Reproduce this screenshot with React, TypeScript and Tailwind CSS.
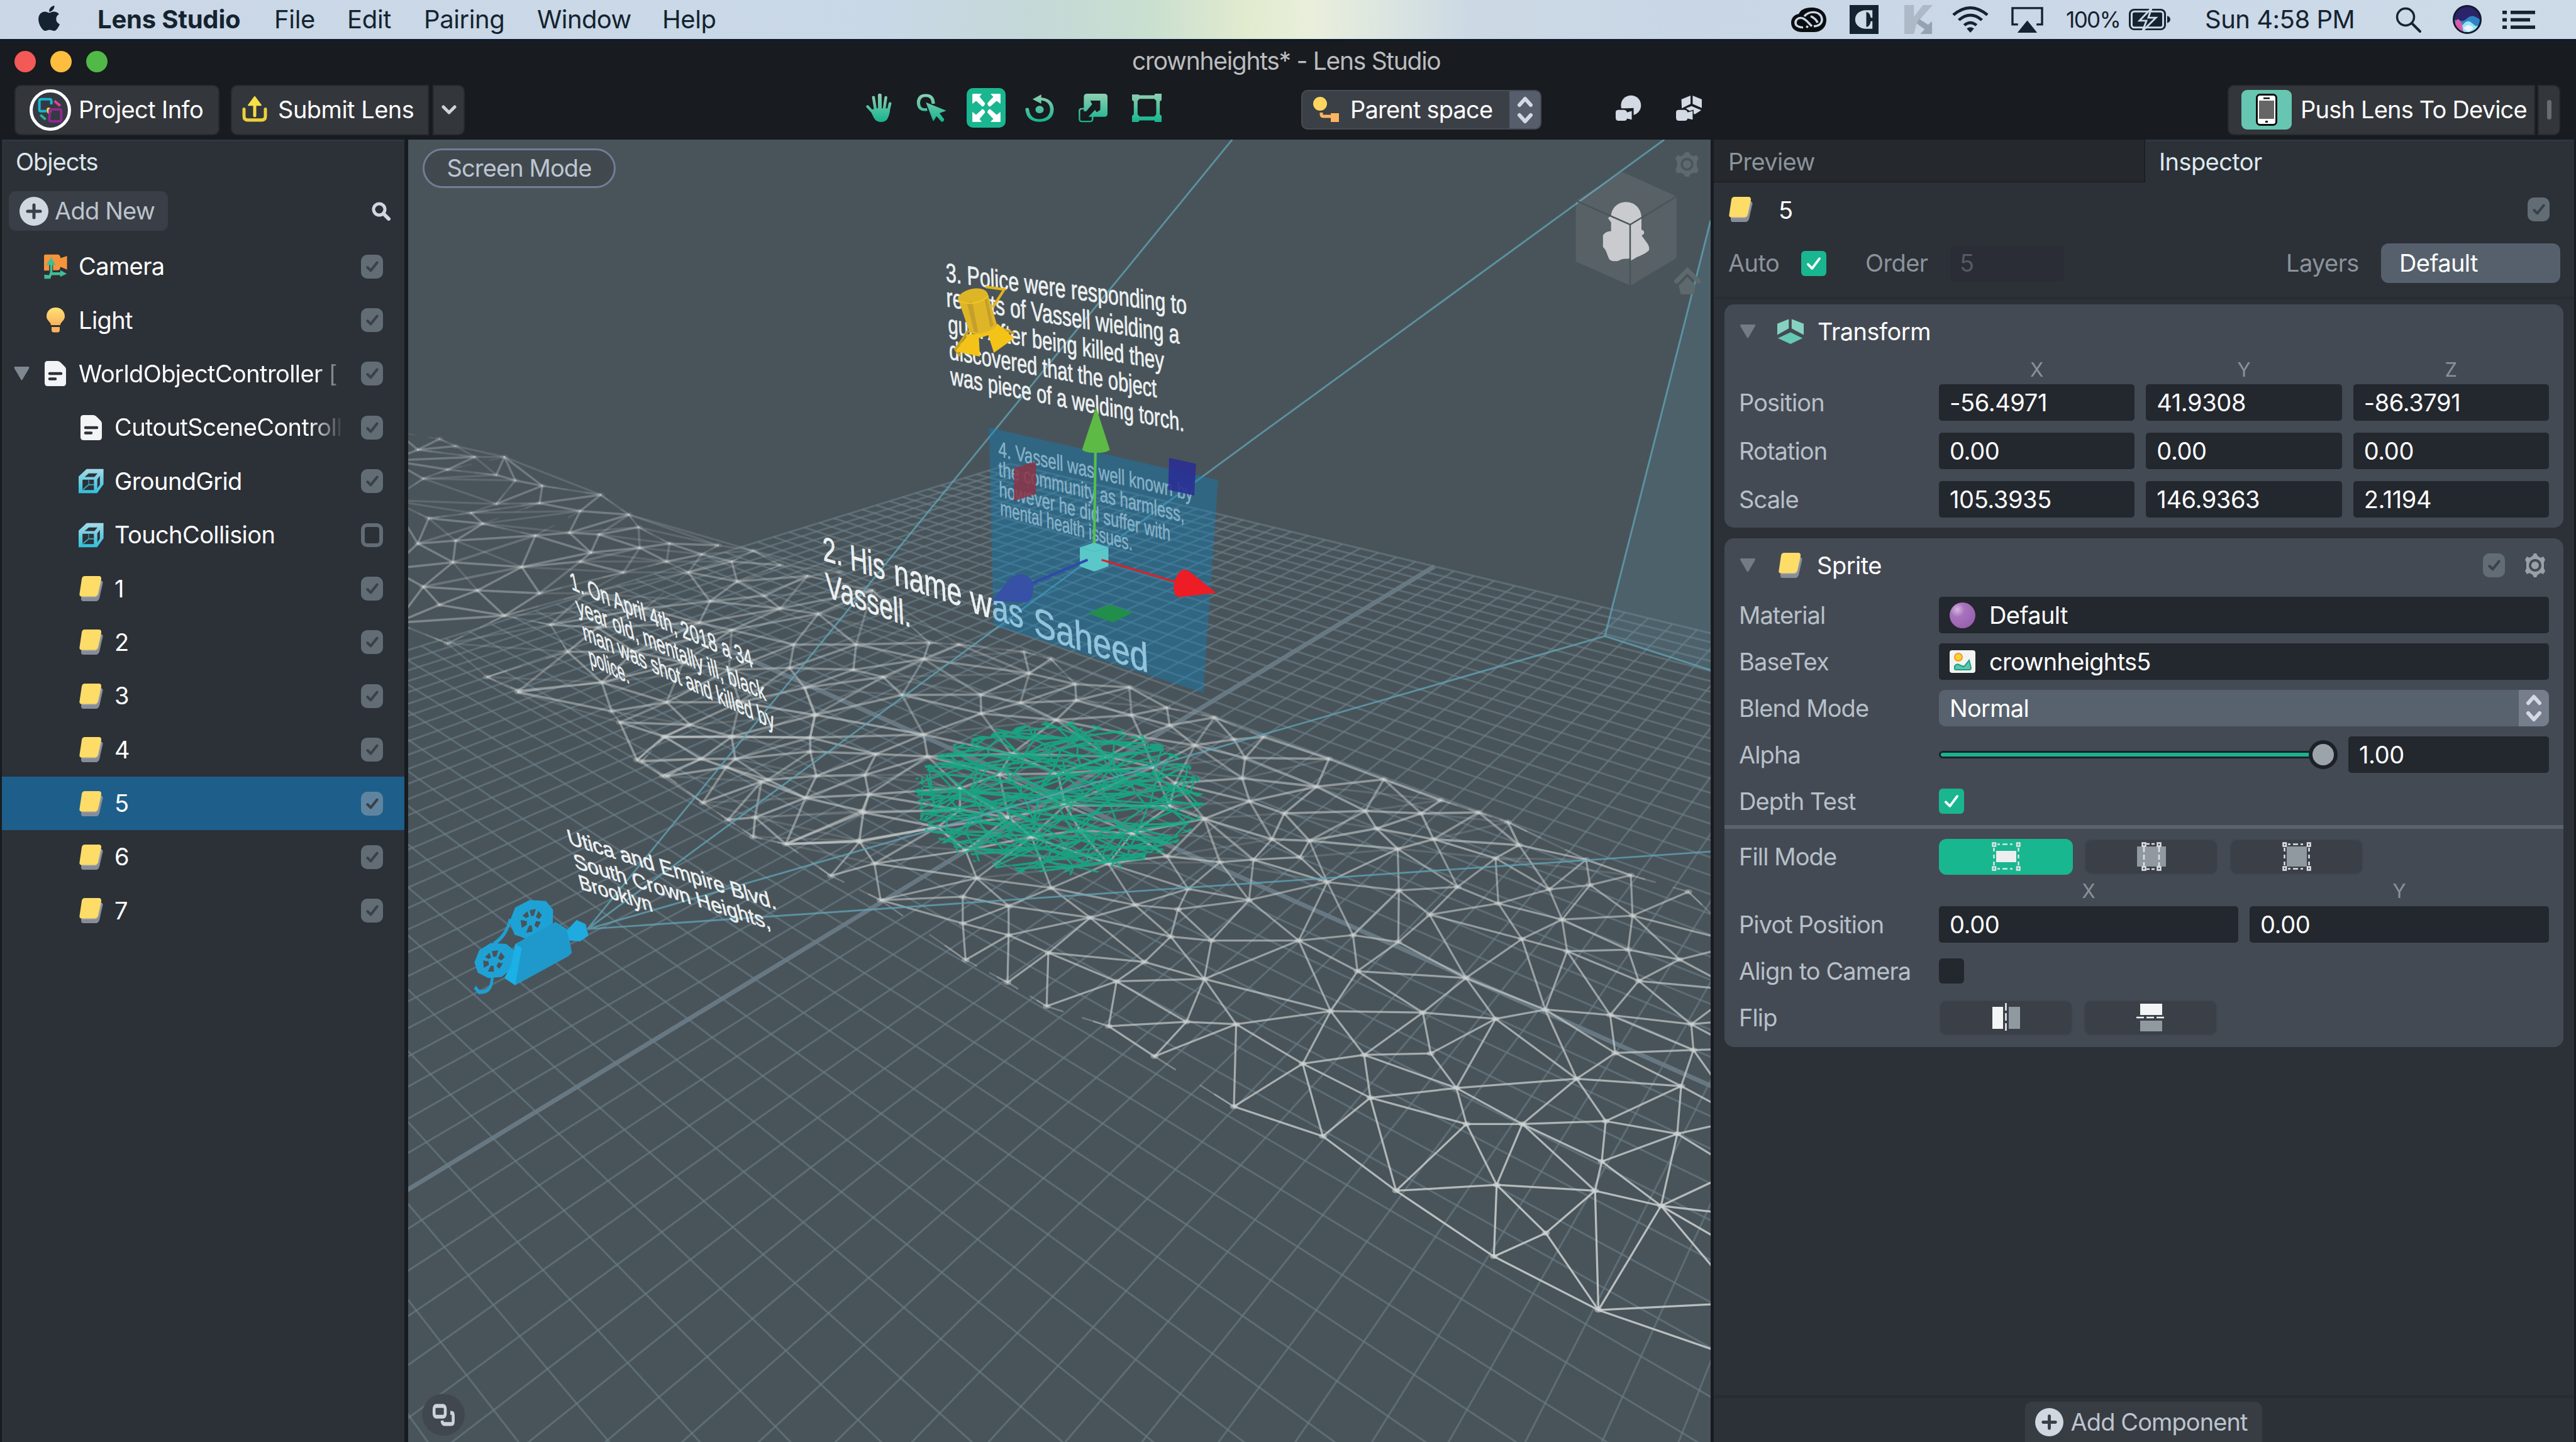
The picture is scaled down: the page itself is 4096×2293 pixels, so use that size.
import React from "react";
import { FaApple } from "react-icons/fa";

/* ---------------------------------------------------------------- helpers */

type Pt = [number, number];

function seeded(seed: number) {
  let s = seed;
  return () => {
    s = (s * 1664525 + 1013904223) % 4294967296;
    return s / 4294967296;
  };
}

type Edge = { a: number; b: number; uses: number };

const sides = (t: number[]): Pt[] => [
  [t[0], t[1]],
  [t[1], t[2]],
  [t[2], t[0]],
];
const edgeKey = (a: number, b: number) => (a < b ? `${a}_${b}` : `${b}_${a}`);

/** Bowyer-Watson triangulation. */
function triangulate(points: Pt[]): number[][] {
  const n = points.length;
  const p: Pt[] = [...points, [-9000, -9000], [9000, -9000], [0, 12000]];
  let tris: number[][] = [[n, n + 1, n + 2]];
  const inCircle = (t: number[], q: Pt) => {
    const [ax, ay] = p[t[0]];
    const [bx, by] = p[t[1]];
    const [cx, cy] = p[t[2]];
    const d = 2 * (ax * (by - cy) + bx * (cy - ay) + cx * (ay - by));
    if (Math.abs(d) < 1e-9) return false;
    const a2 = ax * ax + ay * ay;
    const b2 = bx * bx + by * by;
    const c2 = cx * cx + cy * cy;
    const ux = (a2 * (by - cy) + b2 * (cy - ay) + c2 * (ay - by)) / d;
    const uy = (a2 * (cx - bx) + b2 * (ax - cx) + c2 * (bx - ax)) / d;
    return (q[0] - ux) ** 2 + (q[1] - uy) ** 2 < (ax - ux) ** 2 + (ay - uy) ** 2;
  };
  for (let i = 0; i < n; i++) {
    const bad = tris.filter((t) => inCircle(t, p[i]));
    const open = new Map<string, Pt>();
    bad.forEach((t) =>
      sides(t).forEach(([a, b]) => {
        const k = edgeKey(a, b);
        if (open.has(k)) open.delete(k);
        else open.set(k, [a, b]);
      }),
    );
    tris = tris.filter((t) => !bad.includes(t));
    open.forEach(([a, b]) => tris.push([a, b, i]));
  }
  return tris.filter((t) => t.every((v) => v < n));
}

function edgesOf(tris: number[][]): Map<string, Edge> {
  const edges = new Map<string, Edge>();
  tris.forEach((t) =>
    sides(t).forEach(([a, b]) => {
      const k = edgeKey(a, b);
      const seen = edges.get(k);
      if (seen) seen.uses++;
      else edges.set(k, { a, b, uses: 1 });
    }),
  );
  return edges;
}

/* ------------------------------------------------------- ground projection */

const WA = 0.0172;
const WB = -0.01454;

function project(i: number, j: number): Pt {
  const a = i * WA;
  const b = j * WB;
  const w = 1 + a + b;
  return [(1869 + a * 3923 - b * 941) / w, (1407 + (a + b) * 160) / w];
}

function unproject(x: number, y: number): Pt {
  const s = (1407 - y) / (y - 160);
  const a = (x * (1 + s) - 1869 + 941 * s) / 4864;
  return [a / WA, (s - a) / WB];
}

function gridLines() {
  const out: { a: Pt; b: Pt; main: boolean }[] = [];
  for (let k = -28; k <= 28; k++) {
    const startI = Math.max(-28, (0.12 - 1 - k * WB) / WA);
    out.push({ a: project(startI, k), b: project(28, k), main: k === 0 });
    const endJ = Math.min(28, (1 + k * WA - 0.12) / -WB);
    out.push({ a: project(k, -28), b: project(k, endJ), main: k === 0 });
  }
  return out;
}
const GRID = gridLines();

const nearRaw =
  "58,455 205,503 205,448 287,467 287,527 230,410 210,353 433,491 358,563 480,622 530,582 577,530 513,465 363,430 465,380 590,474 608,432 570,365 650,538 637,617 717,455 725,372 665,377 808,367 825,333 857,418 806,538 903,527 911,601 863,683 694,710 605,705 466,714 548,776 285,624 210,578 355,673 813,791 923,773 1042,770 1028,686 934,861 849,940 690,879 980,1052 1106,915 1088,841 1206,915 1160,1040 1155,1187 1248,1139 1336,1052 1348,992 1342,1297 1454,1083 1483,935 1490,837 1355,909 1303,822 1372,769 1158,699 1247,680 1363,691 1105,615 1414,621 1512,763 1508,710 1286,560 1205,535 1277,495 1395,557 1487,577 1403,487 1327,424 1254,433 1163,462 1090,428 1040,485 984,541 985,435 983,350 945,308 925,272 1047,330 1025,277 1158,369 1200,342 1320,372 1400,404 1503,438 780,277 838,222 758,330 718,252 705,205 710,163 637,288 690,125 743,120 860,165 958,207 620,137 575,96 570,60 507,75 503,18 655,80 408,45 308,50 237,33 238,72 372,85 292,155 270,197 375,195 388,260 415,312 508,318 328,325 287,285 200,225 200,270 160,305 142,160 50,155 30,198 37,238 25,272 20,333 47,380 135,115 585,215 545,182 575,262 465,160 525,120 1180,295 1128,275 1060,250 1600,905 1590,1010 1620,1105 1600,1180 1600,1282 1640,1415 1590,760 1600,700 1590,640 1600,545";
const farRaw =
  "75,1157 148,1250 205,1292 297,1180 265,1105 352,1113 330,1018 245,1018 212,945 237,858 140,825 85,932 90,872 118,795 75,675 125,640 200,705 165,770 245,768 320,790 358,745 410,800 355,855 340,905 430,892 428,835 485,880 480,930 545,910 575,885 520,960 600,930 640,900 690,940 610,985 740,970 660,1025 800,960 860,1010 690,1060 760,1075 715,1160 707,1225 735,1280 615,1320 595,1230 510,1210 480,1320 360,1265 378,1345 475,1415 425,1480 480,1525 600,1415 590,1500 655,1540 745,1418 755,1355 915,1300 955,1200 965,1155 880,1250 825,1230 830,1160 1020,1160 1150,1240 1140,1180 1190,1200 1235,1270 30,700 20,620 60,590 40,810 30,1000 60,1050 20,880 -20,1100 -30,950 -30,760 -30,650 -20,570 400,960 440,1060 540,1100 600,1120 420,1180 560,1040 320,930 130,1010 180,1080 300,850 165,690 90,610 180,640 250,720";
const midRaw =
  "310,25 590,90 650,170 710,200 785,95 715,120 900,120 910,165 815,165 1000,208 1130,75 1118,150 1135,200 1105,245 965,285 1050,340 1175,405 1255,335 1265,275 820,255 960,325 890,290";

const parse = (raw: string): Pt[] =>
  raw.split(" ").map((s) => {
    const [x, y] = s.split(",").map(Number);
    return [x, y] as Pt;
  });

const meshPts: Pt[] = [
  ...parse(nearRaw).map(([x, y]): Pt => [1500 + x / 1.0116, 1200 + y / 1.1615]),
  ...parse(farRaw).map(([x, y]): Pt => [720 + x / 1.0453, 400 + y / 1.568]),
  ...parse(midRaw).map(([x, y]): Pt => [720 + x / 1.568, 1200 + y / 1.1615]),
];

type Seg = { a: Pt; b: Pt; o: number; w: number };

const depthOpacity = (y: number) => Math.min(0.88, Math.max(0.17, 0.17 + ((y - 850) / 1250) * 0.68));
const mix = (a: Pt, b: Pt, t: number): Pt => [a[0] + (b[0] - a[0]) * t, a[1] + (b[1] - a[1]) * t];
const dist = (a: Pt, b: Pt) => Math.hypot(a[0] - b[0], a[1] - b[1]);

function buildMesh(): Seg[] {
  const world = meshPts.map(([x, y]) => unproject(x, y));
  let tris = triangulate(world).filter((t) =>
    sides(t).every(([a, b]) => dist(world[a], world[b]) < 4.7 || dist(meshPts[a], meshPts[b]) < 170),
  );
  for (let pass = 0; pass < 3; pass++) {
    const e = edgesOf(tris);
    tris = tris.filter((t) => {
      const s = sides(t);
      if (s.every(([a, b]) => e.get(edgeKey(a, b))!.uses > 1)) return true;
      const l = s.map(([a, b]) => dist(meshPts[a], meshPts[b])).sort((x, y) => x - y);
      return l[2] < (l[0] + l[1]) * 0.93;
    });
  }
  const segs: Seg[] = [];
  let i = 0;
  edgesOf(tris).forEach((e) => {
    const a = meshPts[e.a];
    const b = meshPts[e.b];
    const y = (a[1] + b[1]) / 2;
    const o = depthOpacity(y);
    i++;
    const keepRim = y > 1950 || i % 4 === 0;
    if (e.uses === 1 && !keepRim) {
      segs.push({ a, b: mix(a, b, 0.42), o: o * 0.45, w: 3 });
      segs.push({ a, b: mix(a, b, 0.24), o: o * 0.6, w: 3 });
      segs.push({ a: b, b: mix(b, a, 0.26), o: o * 0.55, w: 3 });
      return;
    }
    segs.push({ a, b, o, w: y < 1500 ? 4.2 : 3.6 });
  });
  const idx = meshPts.map((_, k) => k).filter((k) => meshPts[k][1] < 1560);
  edgesOf(triangulate(idx.map((k): Pt => [meshPts[k][0] * 0.22, meshPts[k][1]]))).forEach((e) => {
    const a = meshPts[idx[e.a]];
    const b = meshPts[idx[e.b]];
    if (dist(a, b) < 270 && e.uses > 1) segs.push({ a, b, o: 0.17, w: 3.6 });
  });
  return segs;
}
const MESH = buildMesh();

const SPAN_X = 255;
const SPAN_Y = 133;

function buildDisc(seed: number, count: number, squeeze: number): string {
  const rnd = seeded(seed);
  const pts: Pt[] = [];
  while (pts.length < count) {
    const a = rnd() * Math.PI * 2;
    const r = Math.sqrt(rnd()) * 1.1;
    pts.push([Math.cos(a) * r * SPAN_X, Math.sin(a) * r * SPAN_Y]);
  }
  const out: string[] = [];
  edgesOf(triangulate(pts.map(([x, y]): Pt => [x * squeeze, y]))).forEach((e) => {
    const a = pts[e.a];
    const b = pts[e.b];
    out.push(`M${(1872 + a[0]).toFixed(1)} ${(1412 + a[1]).toFixed(1)}L${(1872 + b[0]).toFixed(1)} ${(1412 + b[1]).toFixed(1)}`);
  });
  return out.join("");
}
const discPath = buildDisc(7, 135, 0.3) + buildDisc(99, 90, 0.42);

/* Ragged outline that trims the disc's strands unevenly. */
const discOutline = Array.from({ length: 72 }, (_, i) => {
  const t = (i / 72) * Math.PI * 2;
  const r = i % 2 ? 1.03 : 0.95;
  return `${(1872 + Math.cos(t) * SPAN_X * r).toFixed(1)},${(1412 + Math.sin(t) * SPAN_Y * r).toFixed(1)}`;
}).join(" ");

/* ------------------------------------------------------------ scene pieces */

type LineSpec = { t: string; x: number; y: number; x2: number; y2: number; s: number };

const Line3D = ({ l, lean = 0 }: { l: LineSpec; lean?: number }) => (
  <text
    transform={`matrix(1 ${(l.y2 - l.y) / (l.x2 - l.x)} ${lean} 1 ${l.x} ${l.y})`}
    fontSize={l.s}
    textLength={l.x2 - l.x}
    lengthAdjust="spacingAndGlyphs"
  >
    {l.t}
  </text>
);

const note3: LineSpec[] = [
  { t: "3. Police were responding to", x: 1673, y: 498, x2: 2099, y2: 556, s: 47 },
  { t: "reports of Vassell wielding a", x: 1674, y: 542, x2: 2086, y2: 608, s: 47 },
  { t: "gun. After being killed they", x: 1677, y: 589, x2: 2059, y2: 654, s: 46 },
  { t: "discovered that the object", x: 1679, y: 635, x2: 2046, y2: 703, s: 46 },
  { t: "was piece of a welding torch.", x: 1681, y: 680, x2: 2095, y2: 763, s: 45 },
];
const note4: LineSpec[] = [
  { t: "4. Vassell was well known by", x: 1766, y: 807, x2: 2110, y2: 886, s: 38 },
  { t: "the community as harmless,", x: 1766, y: 842, x2: 2095, y2: 924, s: 38 },
  { t: "however he did suffer with", x: 1767, y: 878, x2: 2070, y2: 957, s: 38 },
  { t: "mental health issues.", x: 1769, y: 911, x2: 2003, y2: 974, s: 38 },
];
const note2: LineSpec[] = [
  { t: "2.", x: 1456, y: 991, x2: 1491, y2: 1001, s: 61 },
  { t: "His", x: 1504, y: 1007, x2: 1566, y2: 1026, s: 64 },
  { t: "name", x: 1582, y: 1034, x2: 1702, y2: 1073, s: 67 },
  { t: "was", x: 1717, y: 1082, x2: 1811, y2: 1112, s: 69 },
  { t: "Saheed", x: 1829, y: 1123, x2: 2032, y2: 1190, s: 72 },
  { t: "Vassell.", x: 1461, y: 1055, x2: 1612, y2: 1110, s: 62 },
];
const note1: LineSpec[] = [
  { t: "1. On April 4th, 2018 a 34", x: 1011, y: 1042, x2: 1334, y2: 1182, s: 45 },
  { t: "year old, mentally ill, black", x: 1022, y: 1086, x2: 1356, y2: 1240, s: 45 },
  { t: "man was shot and killed by", x: 1033, y: 1131, x2: 1372, y2: 1291, s: 45 },
  { t: "police.", x: 1044, y: 1175, x2: 1115, y2: 1210, s: 45 },
];
const note0: LineSpec[] = [
  { t: "Utica and Empire Blvd.", x: 1007, y: 1493, x2: 1375, y2: 1609, s: 39 },
  { t: "South Crown Heights,", x: 1018, y: 1535, x2: 1365, y2: 1644, s: 38 },
  { t: "Brooklyn", x: 1027, y: 1572, x2: 1156, y2: 1613, s: 37 },
];

const Scene = () => (
  <svg
    className="block h-full w-full font-['Liberation_Sans',Arial,sans-serif]"
    viewBox="722 247 2303 2303"
    preserveAspectRatio="none"
  >
    <defs>
      <clipPath id="disc">
        <polygon points={discOutline} />
      </clipPath>
    </defs>
    <rect x="722" y="247" width="2303" height="2303" fill="#49545a" />
    <g stroke="#6b7c86" fill="none">
      {GRID.map((g, i) => (
        <line
          key={i}
          x1={g.a[0]}
          y1={g.a[1]}
          x2={g.b[0]}
          y2={g.b[1]}
          strokeWidth={g.main ? 8 : 3.4}
          strokeOpacity={g.main ? 0.9 : 0.62}
        />
      ))}
    </g>
    <g fill="none" stroke="#c8cdcd" strokeLinecap="round">
      {MESH.map((e, i) => (
        <line
          key={i}
          x1={e.a[0]}
          y1={e.a[1]}
          x2={e.b[0]}
          y2={e.b[1]}
          strokeWidth={e.w}
          strokeOpacity={e.o}
        />
      ))}
    </g>
    <g fill="#d5d9d9">
      {meshPts.map(([x, y], i) => (
        <ellipse key={i} cx={x} cy={y} rx={7} ry={4.500} fillOpacity={depthOpacity(y) * 0.6} />
      ))}
    </g>
    <g clipPath="url(#disc)">
      <path d={discPath} stroke="#12ad87" strokeWidth="3.400" strokeOpacity="0.85" fill="none" />
    </g>

    {/* camera frustum */}
    <path d="M3025 390L2838 1125L3025 1185Z" fill="#5a8ea3" fillOpacity="0.24" />
    <g stroke="#62a5b8" strokeWidth="3.200" strokeOpacity="0.75" fill="none">
      <path d="M1039 1643L2179 247M1039 1643L2220 774L2943 247M1039 1643L2577 1200L2838 1125M1039 1643L3025 1506" />
      <path d="M3025 390L2838 1125L3025 1185" />
    </g>

    {/* view orientation cube */}
    <g transform="translate(2730 140) scale(0.33333)">
      <path d="M415 492L705 622V948L460 1096L170 968V645Z" fill="#ffffff" fillOpacity="0.08" />
      <path
        d="M437 652C485 652 520 690 518 740V800C530 802 536 812 530 822L519 830L545 866C556 880 562 895 558 908C530 935 500 938 485 950L462 963V952C430 952 410 954 400 962C385 968 360 968 349 957C335 935 335 915 322 900L314 890V830C322 812 340 808 357 806V760L341 738L357 722C362 680 395 652 437 652Z"
        fill="#c9cbce"
      />
      <path d="M172 645L458 772L705 622M458 772V1096" fill="none" stroke="#49545a" strokeWidth="8" />
      <g fill="#5e696e">
        <path
          fillRule="evenodd"
          d="M744 400L750 388H770L778 402L795 410L810 402L821 422L812 438V465L821 482L810 500L795 496L778 504L770 518H750L742 504L725 496L709 500L698 482L707 465V438L698 422L709 402L725 410ZM760 418A34 34 0 1 0 760.100 418ZM760 430A22 22 0 1 1 759.900 430Z"
        />
        <path d="M716 1096L762 1050L806 1096L797 1142H727Z" />
        <path d="M704 1072L762 1014L820 1072" fill="none" stroke="#5e696e" strokeWidth="24" strokeLinecap="round" />
      </g>
    </g>

    {/* captions standing in the scene */}
    <g fill="#ecf0f1" stroke="#ecf0f1" strokeWidth="0.900">
      {note3.map((l) => <Line3D key={l.t} l={l} lean={0.03} />)}
      {note2.map((l) => <Line3D key={l.t} l={l} lean={0.05} />)}
      {note1.map((l) => <Line3D key={l.t} l={l} lean={0.2} />)}
      {note0.map((l) => <Line3D key={l.t} l={l} lean={0.25} />)}
    </g>

    {/* selected sprite */}
    <path d="M1749 756L2154 849L2128 1225L1757 1105Z" fill="#0d82bd" fillOpacity="0.4" />
    <g fill="#86b1c8" stroke="#86b1c8" strokeWidth="0.700">
      {note4.map((l) => <Line3D key={l.t} l={l} lean={0.02} />)}
    </g>

    <g transform="translate(1400 400) scale(0.57398)">
      {/* spot light */}
      <path d="M598 187L655 195L620 250" fill="none" stroke="#e3b41a" strokeWidth="8" />
      <path d="M545 322L505 380L520 400M605 300L685 330" fill="none" stroke="#c99f1e" strokeWidth="8" />
      <path d="M512 222C522 192 600 176 606 214L633 305C632 330 545 345 545 318Z" fill="#dfb528" />
      <path d="M540 235L562 325L575 328L556 232ZM594 222L612 312L622 305L602 220Z" fill="#b8962c" fillOpacity="0.7" />
      <path d="M513 228C540 246 590 236 606 214" fill="none" stroke="#f0c326" strokeWidth="4" />
      <path d="M545 332L505 386L580 402L577 345L606 336L623 390L686 345L634 300C625 325 580 335 545 332Z" fill="#f3c318" />

      {/* transform gizmo */}
      <path d="M1163 714L1246 732L1240 830L1160 812Z" fill="#2a2f94" fillOpacity="0.9" />
      <path d="M685 745L753 725V825L685 847Z" fill="#8c3345" fillOpacity="0.85" />
      <path d="M936 690L932 985" stroke="#54bf4d" strokeWidth="8" />
      <path d="M912 1193L978 1166L1052 1190L990 1221Z" fill="#228e4b" />
      <path d="M932 975L976 990V1048L932 1064L888 1048V990Z" fill="#5ac8c9" />
      <path d="M888 990L932 1003L976 990" fill="none" stroke="#49bdc0" strokeWidth="2" />
      <path d="M912 1028L735 1103" stroke="#2f49ad" strokeWidth="8" />
      <path d="M618 1154L672 1085C692 1068 715 1070 732 1082C746 1092 748 1120 740 1142C736 1158 728 1159 712 1159Z" fill="#3751a6" />
      <path d="M955 1028L1185 1097" stroke="#e01f28" strokeWidth="6" />
      <path d="M1308 1130L1232 1069C1216 1056 1204 1055 1194 1067C1178 1085 1172 1118 1182 1136C1187 1143 1194 1143 1205 1142Z" fill="#ee1c25" />
      <path d="M938 558L980 688C976 702 900 702 895 688Z" fill="#5cba45" />
    </g>

    {/* movie camera */}
    <g transform="translate(720 1200) scale(0.63776 0.86096)">
      <path d="M286 494C278 520 262 535 240 545M236 612C236 635 225 645 200 644L188 634" fill="none" stroke="#1d9fd3" strokeWidth="8" />
      <path d="M284 500L300 470L340 455L385 457L405 475L404 503L380 524L330 534L298 526Z" fill="#1ea2d6" />
      <path d="M187 583L200 558L232 543L275 545L300 560L290 596L262 613L225 615L196 604Z" fill="#1ea2d6" />
      <g fill="#49545a">
        <path d="M340 476L357 473L352 487L344 488ZM364 477L374 486L366 494L357 490ZM371 500L362 512L353 507L358 498ZM348 520L330 522L338 508L346 507ZM318 512L315 496L332 498L332 506ZM320 487L334 478L338 489L330 492Z" />
        <path d="M235 560L253 558L248 571L239 572ZM260 562L271 572L262 579L252 575ZM266 585L256 596L248 591L253 583ZM241 602L224 602L232 590L240 590ZM213 594L211 579L226 581L227 588ZM216 572L229 563L233 573L226 576Z" />
      </g>
      <path d="M300 545L412 500L445 515L457 563L448 570L300 630L270 615L288 590Z" fill="#1f99cc" />
      <path d="M300 545L318 553L300 630L270 615L288 590Z" fill="#1bb0e6" />
      <path d="M443 517L470 496L495 504L503 528L480 540L450 538Z" fill="#1fabe0" />
    </g>

    <g transform="translate(720 1200) scale(0.63776 0.86096)">
      <ellipse cx="101" cy="1512" rx="59" ry="43" fill="#41474f" />
      <g fill="none" stroke="#ccd3dc" strokeWidth="8">
        <rect x="75" y="1494" width="31" height="22" rx="6" />
        <path d="M120 1508H123Q128 1508 128 1513V1526Q128 1531 122 1531H103Q98 1531 97 1524" />
      </g>
    </g>
  </svg>
);

/* ------------------------------------------------------------------- icons */

const Crop = ({ vb, cls, children }: { vb: string; cls: string; children: React.ReactNode }) => (
  <svg viewBox={vb} preserveAspectRatio="none" className={`block shrink-0 overflow-visible ${cls}`}>
    {children}
  </svg>
);

const SpriteIcon = ({ cls = "h-[40px] w-[38px]" }: { cls?: string }) => (
  <Crop vb="0 0 38 40" cls={cls}>
    <path d="M8 7H33C36 7 38 9 37 12L32 35C31 38 29 40 26 40H7C4 40 3 38 3 35Z" fill="#9a9fa8" />
    <path d="M4 34H24C28 34 30 32 31 28L36 8L38 10L32 35C31 38 29 40 26 40H7C4 40 3 38 3 35Z" fill="#7c828d" fillOpacity="0.6" />
    <path d="M9 0H31C34 0 35.500 2 35 5L30 28C29 31 27 32.500 24 32.500H4C1 32.500 0 30.500 0.500 28L4 4.500C4.500 1.500 6 0 9 0Z" fill="#fddc68" />
  </Crop>
);

const FileIcon = () => (
  <Crop vb="0 0 34 40" cls="h-[40px] w-[34px]">
    <path d="M5 0H20C22 0 24 1 26 3L32 9C33.500 10.500 34 12 34 14V35Q34 40 29 40H5Q0 40 0 35V5Q0 0 5 0Z" fill="#f3f4f6" />
    <path d="M8 20H26M8 28.500H17" stroke="#2c3037" strokeWidth="4.500" strokeLinecap="round" />
  </Crop>
);

const CubeIcon = () => (
  <Crop vb="299 516 97 56" cls="h-[40px] w-[40px]">
    <defs>
      <linearGradient id="cubeFill" x1="0" y1="0" x2="0" y2="1">
        <stop offset="0" stopColor="#a5dbe9" />
        <stop offset="1" stopColor="#2fbfda" />
      </linearGradient>
    </defs>
    <path
      fill="url(#cubeFill)"
      fillRule="evenodd"
      d="M299 534L330 517H395V551L370 571H299ZM314 541V564H358V541ZM330 531L322 535H360L372 527H338ZM371 540V560L381 552V532Z"
    />
    <path d="M338 541V552H358M338 552L316 563" stroke="#39a9c4" strokeWidth="3" fill="none" />
  </Crop>
);

const CameraIcon = () => (
  <Crop vb="163 58 89 55" cls="h-[40px] w-[37px]">
    <path d="M163 62Q163 59 168 59H215Q225 59 226 67L251 62V92L226 86Q224 94 215 94H163Z" fill="#f6943c" />
    <path d="M190 72V101H232" stroke="#2c3037" strokeWidth="15" fill="none" />
    <path d="M186 98V82H172L190 65L208 82H195V98H225V93L250 101L225 108V104H192L187 112H164V103L182 104Z" fill="#42bd96" />
  </Crop>
);

const BulbIcon = () => (
  <Crop vb="0 0 29 40" cls="h-[40px] w-[29px]">
    <defs>
      <linearGradient id="bulbFill" x1="0" y1="0" x2="0" y2="1">
        <stop offset="0" stopColor="#fde275" />
        <stop offset="1" stopColor="#fbb35c" />
      </linearGradient>
    </defs>
    <path d="M14.500 0C23 0 29 6 29 14C29 21 22 23 22 28H7C7 23 0 21 0 14C0 6 6 0 14.500 0Z" fill="url(#bulbFill)" />
    <path d="M8 31H21V36Q21 39.500 17 39.500H12Q8 39.500 8 36Z" fill="#fbb35c" />
  </Crop>
);

const Check = ({ on = true, selected = false }: { on?: boolean; selected?: boolean }) => (
  <div
    className={`flex h-[38px] w-[35px] shrink-0 items-center justify-center rounded-[10px] ${
      on ? (selected ? "bg-[#5f849f]" : "bg-[#626c75]") : "border-[6px] border-[#626c75]"
    }`}
  >
    {on && (
      <svg viewBox="0 0 16 16" className="h-[20px] w-[20px]">
        <path d="M2 9L6 13L14 3" stroke="#3a4149" strokeWidth="3.400" fill="none" strokeLinecap="round" strokeLinejoin="round" />
      </svg>
    )}
  </div>
);

const GreenCheck = () => (
  <div className="flex h-[40px] w-[40px] shrink-0 items-center justify-center rounded-[6px] bg-[#19b690]">
    <svg viewBox="0 0 20 20" className="h-[26px] w-[26px]">
      <path d="M3 11L8 16L17 4" stroke="#fff" strokeWidth="3" fill="none" strokeLinecap="round" strokeLinejoin="round" />
    </svg>
  </div>
);

const PlusDisc = ({ cls }: { cls: string }) => (
  <svg viewBox="0 0 46 46" className={`shrink-0 ${cls}`}>
    <circle cx="23" cy="23" r="23" fill="#d0d7e0" />
    <path d="M23 13V33M13 23H33" stroke="#3a3e46" strokeWidth="5" strokeLinecap="round" />
  </svg>
);

const Triangle = ({ cls }: { cls: string }) => (
  <svg viewBox="0 0 24 22" className={`shrink-0 ${cls}`}>
    <path d="M1 0H23Q24.500 1 23.500 3L13.500 20Q12 23 10.500 20L0.500 3Q-0.500 1 1 0Z" fill="currentColor" />
  </svg>
);

const Stepper = ({ cls }: { cls: string }) => (
  <div className={`flex h-full shrink-0 items-center justify-center ${cls}`}>
    <svg viewBox="0 0 26 44" className="h-[44px] w-[26px]">
      <path d="M4 14L13 4L22 14M4 30L13 40L22 30" stroke="#d3dae3" strokeWidth="6" fill="none" strokeLinecap="round" strokeLinejoin="round" />
    </svg>
  </div>
);

/* ---------------------------------------------------------------- menu bar */

const MenuBar = () => (
  <div className="flex h-[62px] shrink-0 items-center bg-[linear-gradient(90deg,#cbd7e6_0%,#c9d8e7_34%,#c5d8d8_40%,#c9dfd0_44.500%,#e2ebcf_48.500%,#e9efdc_51%,#ccd9e4_57%,#c9d6e6_65%,#cddae8_100%)] text-[40px] text-[#14232f]">
    <FaApple className="ml-[55px] mb-[4px] size-[46px] shrink-0" />
    <div className="ml-[54px] w-[281px] whitespace-nowrap font-bold tracking-[-0.2px]">Lens Studio</div>
    <div className="w-[116px] tracking-[-0.3px]">File</div>
    <div className="w-[122px] tracking-[-0.3px]">Edit</div>
    <div className="w-[180px] tracking-[-0.4px]">Pairing</div>
    <div className="w-[199px] tracking-[-0.6px]">Window</div>
    <div className="tracking-[-0.4px]">Help</div>
    <div className="ml-auto flex w-[1248px] shrink-0 items-center">
      <Crop vb="0 0 56 42" cls="h-[39px] w-[56px]">
        <path d="M18 42C6 42 0 35 0 26C0 18 5 12 12 11C15 4 22 0 32 0C46 0 56 8 56 21C56 34 48 42 36 42Z" fill="#0a0d10" />
        <g fill="none" stroke="#cbd7e5" strokeWidth="3.600">
          <path d="M36 32C44 32 49 27 49 21C49 13 43 8 35 8C29 8 25 10 21 15M19 34C12 34 7 31 7 26C7 20 12 17 17 18C23 19 27 26 33 32" />
          <path d="M31 15C37 17 41 23 42 26M27 34L24 32" />
        </g>
      </Crop>
      <Crop vb="0 0 52 50" cls="ml-[37px] h-[46px] w-[46px]">
        <rect width="52" height="50" fill="#14232f" />
        <path d="M41 9V22H38C37 16 34 12 30 12V38C34 38 37 34 38 28H41V41H28C17 40 10 34 10 25C10 16 17 10 28 9Z" fill="#cddae8" />
      </Crop>
      <Crop vb="0 0 50 50" cls="ml-[41px] h-[46px] w-[45px]">
        <path d="M0 0H17V20L33 0H50L22 31L17 50H0Z" fill="#adb9c6" />
        <path d="M26 24L42 34L49 28V50H28L36 42L22 32Z" fill="#94a2b1" />
      </Crop>
      <Crop vb="0 0 60 46" cls="ml-[31px] h-[42px] w-[58px]">
        <g fill="none" stroke="#14232f" strokeWidth="5">
          <path d="M2 15Q30 -10 58 15M11 24Q30 7 49 24M20 33Q30 24 40 33" />
        </g>
        <path d="M30 46L24 39Q30 34 36 39Z" fill="#14232f" />
      </Crop>
      <Crop vb="0 0 52 44" cls="ml-[36px] h-[41px] w-[51px]">
        <path d="M11 30H2V2H50V30H41" fill="none" stroke="#14232f" strokeWidth="3.500" />
        <path d="M26 23L42 44H10Z" fill="#14232f" />
      </Crop>
      <div className="ml-[36px] w-[100px] whitespace-nowrap text-[35px] tracking-[-1.6px]">100%</div>
      <Crop vb="0 0 66 36" cls="h-[34px] w-[66px]">
        <rect x="1.500" y="1.500" width="56" height="33" rx="7" fill="none" stroke="#14232f" strokeWidth="3" />
        <rect x="6" y="6" width="47" height="24" rx="3" fill="#14232f" />
        <path d="M61 12Q66 14 66 18T61 24Z" fill="#14232f" />
        <path d="M36 -1L17 20H28L22 37L43 15H31Z" fill="#14232f" stroke="#cddae8" strokeWidth="3" />
      </Crop>
      <div className="ml-[55px] w-[303px] whitespace-nowrap tracking-[-0.5px]">Sun 4:58 PM</div>
      <Crop vb="0 0 41 41" cls="h-[41px] w-[41px]">
        <circle cx="16" cy="16" r="13.500" fill="none" stroke="#14232f" strokeWidth="3.500" />
        <path d="M26 26L39 39" stroke="#14232f" strokeWidth="4" strokeLinecap="round" />
      </Crop>
      <div className="ml-[50px] flex size-[46px] shrink-0 items-center justify-center overflow-hidden rounded-full border-[3px] border-[#15182c] bg-[#2a2468]">
        <Crop vb="0 0 40 40" cls="size-[40px]">
          <path d="M0 20Q12 26 20 18T40 20V40H0Z" fill="#2f83c4" />
          <path d="M0 26Q5 14 10 24T22 34L12 40H0Z" fill="#d95aa8" />
          <path d="M12 30Q20 18 28 26T40 28L30 40H14Z" fill="#8fe6f0" />
          <path d="M14 34Q22 24 30 34L22 40Z" fill="#f3eefb" />
        </Crop>
      </div>
      <Crop vb="0 0 52 32" cls="ml-[33px] h-[29px] w-[52px]">
        <path d="M0 3H7M0 16H7M0 29H7M13 3H52M13 16H44M13 29H52" stroke="#14232f" strokeWidth="6" />
      </Crop>
    </div>
  </div>
);

/* ----------------------------------------------------------------- toolbar */

const ToolDefs = () => (
  <svg className="absolute size-0">
    <defs>
      <linearGradient id="tool" gradientUnits="userSpaceOnUse" x1="0" y1="104" x2="0" y2="255">
        <stop offset="0" stopColor="#8fd0b2" />
        <stop offset="1" stopColor="#14b48e" />
      </linearGradient>
    </defs>
  </svg>
);

const Toolbar = () => (
  <div className="flex h-[92px] shrink-0 items-center pb-[3px] pl-[23px] text-[38px] text-white">
    <ToolDefs />
    <div className="flex h-[80px] w-[326px] shrink-0 items-center rounded-[10px] border-2 border-[#282b30] bg-[#33363b] pl-[22px]">
      <div className="flex size-[66px] shrink-0 items-center justify-center rounded-full border-[5px] border-white bg-[#343a44]">
        <Crop vb="76 515 46 125" cls="h-[38px] w-[38px]">
          <path d="M92 583H80Q78 583 78 575V530Q78 521 82 521H98Q101 521 101 530V548" fill="none" stroke="#19b4cf" strokeWidth="4" vectorEffect="non-scaling-stroke" />
          <path d="M98 565Q92 562 92 575Q92 600 100 600L101 578Z" fill="#f8d44a" />
          <path d="M98 590V580Q98 574 101 574H116Q120 574 120 583V628Q120 637 116 637H101Q97 637 97 628Z" fill="none" stroke="#93278f" strokeWidth="4" vectorEffect="non-scaling-stroke" />
          <path d="M107 530L118 555" stroke="#ee3f8c" strokeWidth="4" vectorEffect="non-scaling-stroke" />
          <path d="M80 603L90 627" stroke="#27b58c" strokeWidth="4" vectorEffect="non-scaling-stroke" />
        </Crop>
      </div>
      <span className="ml-[12px] whitespace-nowrap tracking-[-0.6px]">Project Info</span>
    </div>
    <div className="ml-[18px] flex h-[80px] w-[315px] shrink-0 items-center rounded-l-[10px] border-2 border-[#282b30] bg-[#33363b] pl-[16px]">
      <Crop vb="0 0 40 38" cls="h-[39px] w-[40px]">
        <path d="M3 18V29Q3 35 9 35H31Q37 35 37 29V18" fill="none" stroke="#ecd03c" strokeWidth="5" strokeLinecap="round" />
        <path d="M20 28V8" stroke="#f4dc45" strokeWidth="5" strokeLinecap="round" />
        <path d="M20 -1L30 12H10Z" fill="#f7df4a" stroke="#f7df4a" strokeWidth="2" strokeLinejoin="round" />
      </Crop>
      <span className="ml-[17px] whitespace-nowrap tracking-[-0.5px]">Submit Lens</span>
    </div>
    <div className="ml-[6px] flex h-[80px] w-[51px] shrink-0 items-center justify-center rounded-r-[10px] border-2 border-[#282b30] bg-[#33363b]">
      <svg viewBox="0 0 24 15" className="h-[15px] w-[24px]">
        <path d="M3 3L12 12L21 3" stroke="#ccd4de" strokeWidth="5" fill="none" strokeLinecap="round" strokeLinejoin="round" />
      </svg>
    </div>

    <div className="mb-[6px] ml-[638px] flex w-[470px] shrink-0 items-center">
      <Crop vb="80 104 118 151" cls="h-[45px] w-[41px]">
        <path d="M100 190L130 182L180 182L190 190Q186 225 175 243Q165 255 148 255Q130 255 120 240Q110 222 100 190Z" fill="url(#tool)" />
        <g stroke="url(#tool)" fill="none" strokeLinecap="round">
          <path d="M87 172L118 212M114 122L124 195M171 123L162 195M190 156L178 215" strokeWidth="13" />
          <path d="M143 112L143.500 200" strokeWidth="17" />
        </g>
      </Crop>
      <Crop vb="321 104 133 151" cls="ml-[40px] h-[45px] w-[46px]">
        <path d="M368 188Q328 196 328 150Q330 113 362 113Q396 114 396 158" fill="none" stroke="url(#tool)" strokeWidth="15" />
        <path d="M362 150L456 195L425 208L446 240Q445 255 434 254L411 224L396 252Z" fill="url(#tool)" stroke="#181b1f" strokeWidth="4" paintOrder="stroke" />
      </Crop>
      <div className="ml-[33px] flex h-[63px] w-[62px] shrink-0 items-center justify-center rounded-[10px] bg-[#19b690]">
        <Crop vb="570 104 132 151" cls="h-[45px] w-[45px]">
          <g fill="#fff" stroke="#fff" strokeWidth="3" strokeLinejoin="round">
            <path d="M572 106H612L602 120L628 155Q626 170 617 171L588 140L572 155Z" />
            <path d="M700 106H658L670 120L642 155Q644 170 653 171L684 140L700 155Z" />
            <path d="M572 253H612L602 239L628 204Q626 189 617 188L588 219L572 204Z" />
            <path d="M700 253H658L670 239L642 204Q644 189 653 188L684 219L700 204Z" />
          </g>
        </Crop>
      </div>
      <Crop vb="826 106 114 149" cls="ml-[32px] h-[44px] w-[44px]">
        <path d="M832 186Q836 247 884 247Q933 243 934 186Q931 133 884 130" fill="none" stroke="url(#tool)" strokeWidth="15" strokeLinecap="round" />
        <path d="M854 132L890 107V157Z" fill="url(#tool)" />
        <ellipse cx="883" cy="188" rx="17" ry="20" fill="url(#tool)" />
      </Crop>
      <Crop vb="1065 104 132 151" cls="ml-[40px] h-[45px] w-[46px]">
        <path d="M1105 104H1182Q1197 104 1197 120V211Q1197 227 1182 227H1110L1140 190L1148 203L1164 190V141H1118L1127 160L1100 198L1089 198V120Q1089 104 1105 104Z" fill="url(#tool)" />
        <path d="M1092 184H1080Q1069 184 1069 196V238Q1069 252 1080 252H1116Q1129 252 1129 238V222" fill="none" stroke="url(#tool)" strokeWidth="7" />
      </Crop>
      <Crop vb="1312 104 133 151" cls="ml-[39px] h-[45px] w-[47px]">
        <path d="M1312 108H1340L1346 112H1412L1416 104H1445V138L1437 145V214L1445 222V255H1416L1412 247H1346L1340 255H1312V222L1320 214V145L1312 138ZM1346 132L1337 142V214L1346 226H1412L1421 214V142L1412 132Z" fill="url(#tool)" fillRule="evenodd" />
      </Crop>
    </div>

    <div className="ml-[222px] flex h-[63px] w-[382px] shrink-0 items-center overflow-hidden rounded-[10px] border-2 border-[#474b53] bg-[#3b3f46] pl-[17px]">
      <Crop vb="0 0 41 40" cls="h-[40px] w-[41px]">
        <circle cx="11" cy="10" r="11" fill="#fdd560" />
        <path d="M13 24V27Q13 30 17 30H30" fill="none" stroke="#fcb45f" strokeWidth="5" />
        <rect x="28" y="25" width="13" height="14" fill="#fcb45f" />
      </Crop>
      <span className="ml-[18px] whitespace-nowrap tracking-[-0.8px]">Parent space</span>
      <Stepper cls="ml-auto w-[49px] bg-[#565d6b]" />
    </div>

    <div className="mb-[6px] ml-[118px] flex w-[137px] shrink-0 items-center">
      <Crop vb="380 82 133 134" cls="h-[40px] w-[40px]">
        <circle cx="461" cy="134" r="53" fill="#d3dae4" />
        <path d="M380 150H440L475 148V216H380Z" fill="#181b1f" />
        <path d="M392 158H425Q438 160 440 172L465 164V210L440 204Q438 216 425 216H392Q380 214 380 200V172Q380 160 392 158Z" fill="#d3dae4" />
      </Crop>
      <Crop vb="702 82 135 134" cls="ml-[56px] h-[40px] w-[41px]">
        <g fill="#d3dae4">
          <path d="M730 102L778 82V126L732 150ZM789 82L837 102V148L789 126ZM753 150L783 138L834 160L800 182Z" />
          <path d="M714 158H747Q760 160 762 172L789 164V210L762 204Q760 216 747 216H714Q702 214 702 200V172Q702 160 714 158Z" stroke="#181b1f" strokeWidth="10" paintOrder="stroke" />
        </g>
      </Crop>
    </div>

    <div className="ml-[836px] flex h-[80px] w-[489px] shrink-0 items-center rounded-l-[10px] border-2 border-[#282b30] bg-[#33363b] pl-[20px]">
      <div className="flex h-[63px] w-[80px] shrink-0 items-center justify-center rounded-[9px] bg-[#66c6b1]">
        <Crop vb="0 0 34 51" cls="h-[51px] w-[34px]">
          <rect x="1.500" y="1.500" width="31" height="48" rx="5" fill="#fff" stroke="#0b0d0f" strokeWidth="3" />
          <rect x="5" y="11" width="24" height="29" fill="#666" />
          <rect x="12" y="6" width="10" height="2.500" fill="#111" />
          <rect x="15" y="43" width="4" height="3" fill="#111" />
        </Crop>
      </div>
      <span className="ml-[14px] whitespace-nowrap tracking-[-0.8px]">Push Lens To Device</span>
    </div>
    <div className="ml-[4px] flex h-[80px] w-[36px] shrink-0 items-center justify-center rounded-r-[10px] border-2 border-[#282b30] bg-[#33363b]">
      <div className="h-[31px] w-[7px] rounded-full bg-[#686c72]" />
    </div>
  </div>
);

/* ----------------------------------------------------------- objects panel */

type Node = { name: string; kind: "camera" | "light" | "file" | "cube" | "sprite"; level: 1 | 2; off?: boolean; open?: boolean; fade?: boolean };

const nodes: Node[] = [
  { name: "Camera", kind: "camera", level: 1 },
  { name: "Light", kind: "light", level: 1 },
  { name: "WorldObjectController [", kind: "file", level: 1, open: true, fade: true },
  { name: "CutoutSceneControll", kind: "file", level: 2, fade: true },
  { name: "GroundGrid", kind: "cube", level: 2 },
  { name: "TouchCollision", kind: "cube", level: 2, off: true },
  ...["1", "2", "3", "4", "5", "6", "7"].map((name): Node => ({ name, kind: "sprite", level: 2 })),
];

const ObjectsPanel = () => (
  <div className="flex w-[646px] shrink-0 flex-col pl-[3px] pr-[3px]">
    <div className="flex h-full flex-col border-t-[3px] border-[#2f3740] bg-[#2c3037]">
      <div className="flex h-[64px] items-center pl-[22px] text-[38px] tracking-[-1px] text-[#dde7eb]">Objects</div>
      <div className="mt-[15px] flex h-[63px] items-center justify-between pl-[11px] pr-[22px]">
        <div className="flex h-[63px] w-[253px] items-center rounded-[11px] bg-[#3a3e46] pl-[17px] text-[38px] text-[#bcc4cd]">
          <PlusDisc cls="size-[46px]" />
          <span className="ml-[10px] whitespace-nowrap tracking-[-0.8px]">Add New</span>
        </div>
        <svg viewBox="0 0 30 30" className="size-[30px]">
          <circle cx="12" cy="12" r="9" fill="none" stroke="#d0d7e0" strokeWidth="5" />
          <path d="M19 19L27 27" stroke="#d0d7e0" strokeWidth="6" strokeLinecap="round" />
        </svg>
      </div>
      <div className="mt-[14px] flex flex-col text-[38px] text-white">
        {nodes.map((n) => (
          <div key={n.name} className={`flex h-[85.400px] items-center pr-[34px] ${n.name === "5" ? "bg-[#1d5f8a]" : ""}`}>
            <div className={`flex shrink-0 justify-end ${n.level === 2 ? "w-[163px]" : "w-[106px]"}`}>
              {n.open && <Triangle cls="mr-auto ml-[19px] mt-[9px] h-[22px] w-[25px] text-[#7f8790]" />}
              <div className="flex w-[42px] justify-center">
                {n.kind === "camera" && <CameraIcon />}
                {n.kind === "light" && <BulbIcon />}
                {n.kind === "file" && <FileIcon />}
                {n.kind === "cube" && <CubeIcon />}
                {n.kind === "sprite" && <SpriteIcon />}
              </div>
            </div>
            <div
              className={`mr-auto whitespace-nowrap tracking-[-0.600px] ${n.level === 2 ? "ml-[16px]" : "ml-[16px]"} ${
                n.fade
                  ? n.level === 1
                    ? "w-[428px] [mask-image:linear-gradient(90deg,#000_88%,transparent_99%)]"
                    : "w-[372px] [mask-image:linear-gradient(90deg,#000_83%,transparent_98%)]"
                  : ""
              }`}
            >
              {n.name}
            </div>
            <Check on={!n.off} selected={n.name === "5"} />
          </div>
        ))}
      </div>
    </div>
  </div>
);

/* --------------------------------------------------------- inspector panel */

const Label = ({ children }: { children: React.ReactNode }) => (
  <div className="w-[318px] shrink-0 whitespace-nowrap text-[38px] tracking-[-0.900px] text-[#b7c0c8]">{children}</div>
);

const Input = ({ children, cls }: { children: React.ReactNode; cls: string }) => (
  <div className={`flex h-[58px] items-center whitespace-nowrap rounded-[5px] bg-[#23272e] pl-[17px] text-[38px] tracking-[-0.4px] text-white ${cls}`}>
    {children}
  </div>
);

const Axis = ({ children }: { children: React.ReactNode }) => (
  <div className="flex-1 text-center text-[31px] leading-none text-[#89929b]">{children}</div>
);

const Vec = ({ label, v }: { label: string; v: string[] }) => (
  <div className="flex h-[58px] items-center">
    <Label>{label}</Label>
    <div className="flex flex-1 gap-[18px]">
      {v.map((s, i) => (
        <Input key={i} cls="flex-1">{s}</Input>
      ))}
    </div>
  </div>
);

const GearIcon = () => (
  <svg viewBox="0 0 34 38" className="h-[38px] w-[34px] shrink-0">
    <path
      fill="#99a1a8"
      fillRule="evenodd"
      d="M13 4L15 0H19L21 4L26 7L30 5L33 10L31 14V24L33 28L30 33L26 31L21 34L19 38H15L13 34L8 31L4 33L1 28L3 24V14L1 10L4 5L8 7ZM17 9A10 10 0 1 0 17.100 9ZM17 13A6 6 0 1 1 16.900 13Z"
    />
  </svg>
);

const FillButton = ({ mode }: { mode: 0 | 1 | 2 }) => (
  <div
    className={`flex h-[57px] w-[213px] items-center justify-center rounded-[12px] ${
      mode === 0 ? "bg-[#19b78f]" : "border-2 border-[#41464f] bg-[#3b3f47]"
    }`}
  >
    <svg viewBox="0 0 46 46" className="h-[46px] w-[46px]">
      {mode === 0 && <rect x="7" y="14" width="32" height="18" fill="#eceef0" />}
      {mode === 1 && <rect x="0" y="7" width="46" height="32" fill="#8f999f" />}
      {mode === 2 && <rect x="7" y="7" width="32" height="32" fill="#8f999f" />}
      {mode === 1 ? (
        <g fill="none" stroke="#dfe2e5" strokeWidth="2.500">
          <path d="M15 3H31M15 43H31" strokeDasharray="5 3" />
          <path d="M11 8V38M35 8V38" strokeDasharray="8 4" />
          <path d="M8.500 1.500h5v5h-5zM32.500 1.500h5v5h-5zM8.500 39.500h5v5h-5zM32.500 39.500h5v5h-5z" />
        </g>
      ) : (
        <g fill="none" stroke="#dfe2e5" strokeWidth="2.500">
          <path d="M9 3.500H37M9 42.500H37" strokeDasharray="4 4 8 4" />
          <path d="M3.500 9V37M42.500 9V37" strokeDasharray="6 5" />
          <path d="M1.500 1.500h4.500v5h-4.500zM40 1.500h4.500v5h-4.500zM1.500 39.500h4.500v5h-4.500zM40 39.500h4.500v5h-4.500z" />
        </g>
      )}
    </svg>
  </div>
);

const Inspector = () => (
  <div className="flex w-[1371px] shrink-0 flex-col pr-[3px]">
    <div className="flex h-full flex-col bg-[#2c3037]">
      <div className="flex h-[68px] shrink-0 text-[38px]">
        <div className="flex w-[686px] items-center border-b border-r-2 border-[#1b1e22] bg-[#25282c] pl-[23px] pt-[3px] tracking-[-0.7px] text-[#8b949b]">Preview</div>
        <div className="flex flex-1 items-center border-t-[3px] border-[#2f3740] pl-[22px] tracking-[-0.6px] text-[#dde9ef]">Inspector</div>
      </div>

      <div className="mt-[11px] flex h-[64px] shrink-0 items-center pl-[24px] pr-[39px]">
        <SpriteIcon cls="h-[40px] w-[38px]" />
        <span className="ml-[41px] mt-[3px] text-[38px] text-white">5</span>
        <div className="ml-auto"><Check /></div>
      </div>
      <div className="mt-[22px] flex h-[63px] shrink-0 items-center pl-[23px] text-[38px] tracking-[-0.6px] text-[#8b939b]">
        <span className="w-[116px]">Auto</span>
        <GreenCheck />
        <span className="ml-[62px] w-[135px]">Order</span>
        <div className="flex h-[58px] w-[181px] items-center rounded-[6px] bg-[#2a2d35] pl-[15px] text-[#555a62]">5</div>
        <span className="ml-[353px]">Layers</span>
        <div className="ml-auto mr-[22px] flex h-[63px] w-[285px] items-center rounded-[12px] bg-[#56606d] pl-[29px] text-white">Default</div>
      </div>
      <div className="mt-[22px] h-[4px] shrink-0 bg-[#292d32]" />

      <div className="mx-[17px] mt-[8px] flex h-[355px] shrink-0 flex-col rounded-[15px] bg-[#444a54] pl-[23px] pr-[23px]">
        <div className="flex h-[86px] items-center">
          <Triangle cls="ml-px h-[22px] w-[26px] text-[#737c86]" />
          <Crop vb="127 97 46 99" cls="ml-[34px] h-[40px] w-[42px]">
            <path d="M147 98V135L127 160V116ZM152 98V135L173 160V116Z" fill="#86d2c1" />
            <path d="M150 150L171 173L150 196L128 173Z" fill="#66c9b5" />
          </Crop>
          <span className="ml-[22px] text-[38px] tracking-[-0.5px] text-white">Transform</span>
        </div>
        <div className="flex h-[41px] items-center gap-[18px] pb-[7px] pl-[318px]">
          <Axis>X</Axis>
          <Axis>Y</Axis>
          <Axis>Z</Axis>
        </div>
        <div className="flex flex-col gap-[19px]">
          <Vec label="Position" v={["-56.4971", "41.9308", "-86.3791"]} />
          <Vec label="Rotation" v={["0.00", "0.00", "0.00"]} />
          <Vec label="Scale" v={["105.3935", "146.9363", "2.1194"]} />
        </div>
      </div>

      <div className="mx-[17px] mt-[17px] flex h-[809px] shrink-0 flex-col rounded-[15px] bg-[#444a54]">
        <div className="flex h-[86px] shrink-0 items-center pl-[24px] pr-[28px]">
          <Triangle cls="h-[22px] w-[26px] text-[#737c86]" />
          <div className="ml-[36px]"><SpriteIcon /></div>
          <span className="ml-[23px] text-[38px] tracking-[-0.5px] text-white">Sprite</span>
          <div className="ml-auto mr-[31px]"><Check /></div>
          <GearIcon />
        </div>
        <div className="mt-[7px] flex flex-col gap-[16px] pl-[23px] pr-[23px]">
          <div className="flex h-[58px] items-center">
            <Label>Material</Label>
            <Input cls="flex-1">
              <div className="size-[41px] rounded-full bg-[radial-gradient(circle_at_30%_28%,#d9b8e0_0%,#a873bd_28%,#9158a8_100%)]" />
              <span className="ml-[22px] tracking-[-0.6px]">Default</span>
            </Input>
          </div>
          <div className="flex h-[58px] items-center">
            <Label>BaseTex</Label>
            <Input cls="flex-1">
              <svg viewBox="0 0 41 36" className="h-[36px] w-[41px]">
                <rect width="41" height="36" rx="4" fill="#f3f3f1" />
                <circle cx="14" cy="11" r="6" fill="#fcd12a" stroke="#f09a2c" strokeWidth="2" />
                <path d="M8 29V25Q12 20 17 24L23 26L31 16L34 28Q34 31 31 31H10Q8 31 8 29Z" fill="#5fc3ad" stroke="#1d9e81" strokeWidth="2" />
              </svg>
              <span className="ml-[22px] tracking-[-0.7px]">crownheights5</span>
            </Input>
          </div>
          <div className="flex h-[58px] items-center">
            <Label>Blend Mode</Label>
            <div className="flex h-[58px] flex-1 items-center overflow-hidden rounded-[10px] bg-[#58626e] pl-[17px] text-[38px] tracking-[-0.7px] text-white">
              Normal
              <Stepper cls="ml-auto w-[48px] bg-[#767d8c]" />
            </div>
          </div>
          <div className="flex h-[58px] items-center">
            <Label>Alpha</Label>
            <div className="flex w-[634px] items-center">
              <div className="h-[12px] w-[591px] rounded-l-full border-[3px] border-r-0 border-[#1d2127] bg-[#19b48e]" />
              <div className="-ml-[2px] size-[46px] rounded-full border-[6px] border-[#1d2127] bg-[#9aa4aa]" />
            </div>
            <Input cls="ml-auto w-[319px]">1.00</Input>
          </div>
          <div className="flex h-[58px] items-center">
            <Label>Depth Test</Label>
            <GreenCheck />
          </div>
        </div>
        <div className="mt-[9px] h-[6px] shrink-0 bg-[#59636e]" />
        <div className="mt-[15px] flex h-[58px] items-center gap-[18px] pl-[23px]">
          <div className="-mr-[18px]"><Label>Fill Mode</Label></div>
          <FillButton mode={0} />
          <FillButton mode={1} />
          <FillButton mode={2} />
        </div>
        <div className="flex h-[50px] items-center gap-[18px] pl-[341px] pr-[23px]">
          <Axis>X</Axis>
          <Axis>Y</Axis>
        </div>
        <div className="pl-[23px] pr-[23px]">
          <Vec label="Pivot Position" v={["0.00", "0.00"]} />
        </div>
        <div className="mt-[16px] flex h-[58px] items-center pl-[23px]">
          <Label>Align to Camera</Label>
          <div className="size-[40px] rounded-[6px] bg-[#23272e]" />
        </div>
        <div className="mt-[16px] flex h-[58px] items-center pl-[23px]">
          <Label>Flip</Label>
          <div className="flex h-[57px] w-[213px] items-center justify-center rounded-[12px] border-2 border-[#41464f] bg-[#3b3f47]">
            <svg viewBox="0 0 44 46" className="h-[46px] w-[44px]">
              <rect x="0" y="6" width="17" height="35" fill="#f3f4f5" />
              <rect x="26" y="6" width="18" height="35" fill="#8f999f" />
              <path d="M21.500 0V46" stroke="#f0f1f2" strokeWidth="2.500" strokeDasharray="12 4" />
            </svg>
          </div>
          <div className="ml-[17px] flex h-[57px] w-[213px] items-center justify-center rounded-[12px] border-2 border-[#41464f] bg-[#3b3f47]">
            <svg viewBox="0 0 46 44" className="h-[44px] w-[46px]">
              <rect x="6" y="0" width="35" height="18" fill="#f3f4f5" />
              <rect x="6" y="27" width="35" height="17" fill="#8f999f" />
              <path d="M0 22H46" stroke="#f0f1f2" strokeWidth="2.500" strokeDasharray="12 4" />
            </svg>
          </div>
        </div>
      </div>

      <div className="mt-auto flex h-[74px] shrink-0 items-end justify-center border-t-4 border-[#282c31]">
        <div className="mr-[2px] flex h-[64px] w-[377px] items-center rounded-t-[11px] bg-[#383c43] pl-[16px] text-[38px] text-[#bcc4cd]">
          <PlusDisc cls="size-[45px]" />
          <span className="ml-[12px] whitespace-nowrap tracking-[-0.900px]">Add Component</span>
        </div>
      </div>
    </div>
  </div>
);

/* --------------------------------------------------------------------- app */

export default function App() {
  return (
    <div className="flex h-[2293px] w-[4096px] flex-col overflow-hidden bg-[#181b1f] font-['Inter','Liberation_Sans',sans-serif] antialiased">
      <MenuBar />
      <div className="h-[3px] shrink-0 bg-[#0c1a2b]" />
      <div className="flex h-[65px] shrink-0 items-center pl-[23px]">
        <div className="flex w-[1777px] gap-[23px]">
          <div className="size-[34px] rounded-full bg-[#f35956]" />
          <div className="size-[34px] rounded-full bg-[#fdbd3e]" />
          <div className="size-[34px] rounded-full bg-[#50b948]" />
        </div>
        <div className="whitespace-nowrap text-[39px] tracking-[-1.300px] text-[#bbbdbf]">crownheights* - Lens Studio</div>
      </div>
      <Toolbar />
      <div className="flex h-[2071px] shrink-0">
        <ObjectsPanel />
        <div className="relative ml-[3px] h-full w-[2071px] shrink-0">
          <Scene />
          <div className="absolute left-[23px] top-[14px] flex h-[63px] w-[307px] items-center justify-center rounded-full border-[3px] border-[#727d96] bg-[#41494f] text-[38px] tracking-[-0.900px] text-[#bdc5cf]">
            Screen Mode
          </div>
        </div>
        <div className="w-[5px] shrink-0" />
        <Inspector />
      </div>
    </div>
  );
}
